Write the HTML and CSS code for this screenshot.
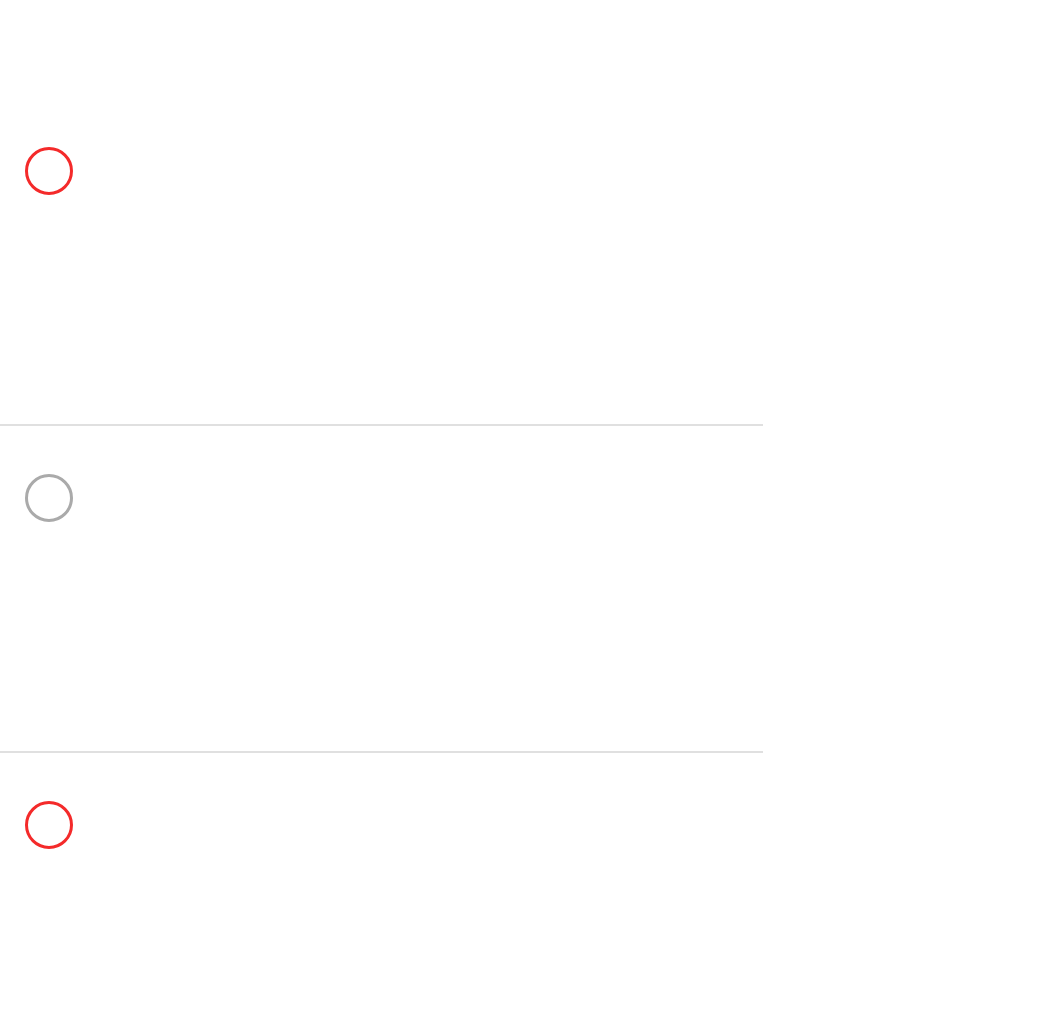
FILE: index.html
```html
<!DOCTYPE html>
<html lang="en">
<head>
    <meta charset="UTF-8">
    <meta name="viewport" content="width=device-width, initial-scale=1.0">
    <title>Checklist</title>
    <link rel="stylesheet" href="styles.css">
</head>
<body>
    <ul class="lista">
        <li class="item">
            <span class="marcador marcador-erro"></span>
        </li>
        <li class="item">
            <span class="marcador"></span>
        </li>
        <li class="item">
            <span class="marcador marcador-erro"></span>
        </li>
    </ul>
</body>
</html>
```

FILE: styles.css
```css
body {
    font-family: Arial, "Liberation Sans", sans-serif;
    margin: 0;
    padding: 0;
    background-color: #fff;
}

.lista {
    list-style: none;
    margin: 0;
    padding: 99px 0 0 0;
    width: 763px;
}

.item {
    display: flex;
    align-items: flex-start;
    height: 277px;
    padding: 48px 25px 0;
    border-bottom: 2px solid #e0e0e0;
}

.item:last-child {
    border-bottom: none;
}

.marcador {
    display: block;
    width: 48px;
    height: 48px;
    border: 3px solid #aaa;
    border-radius: 50%;
    box-sizing: border-box;
}

.marcador-erro {
    border-color: #f42a2a;
}
```
